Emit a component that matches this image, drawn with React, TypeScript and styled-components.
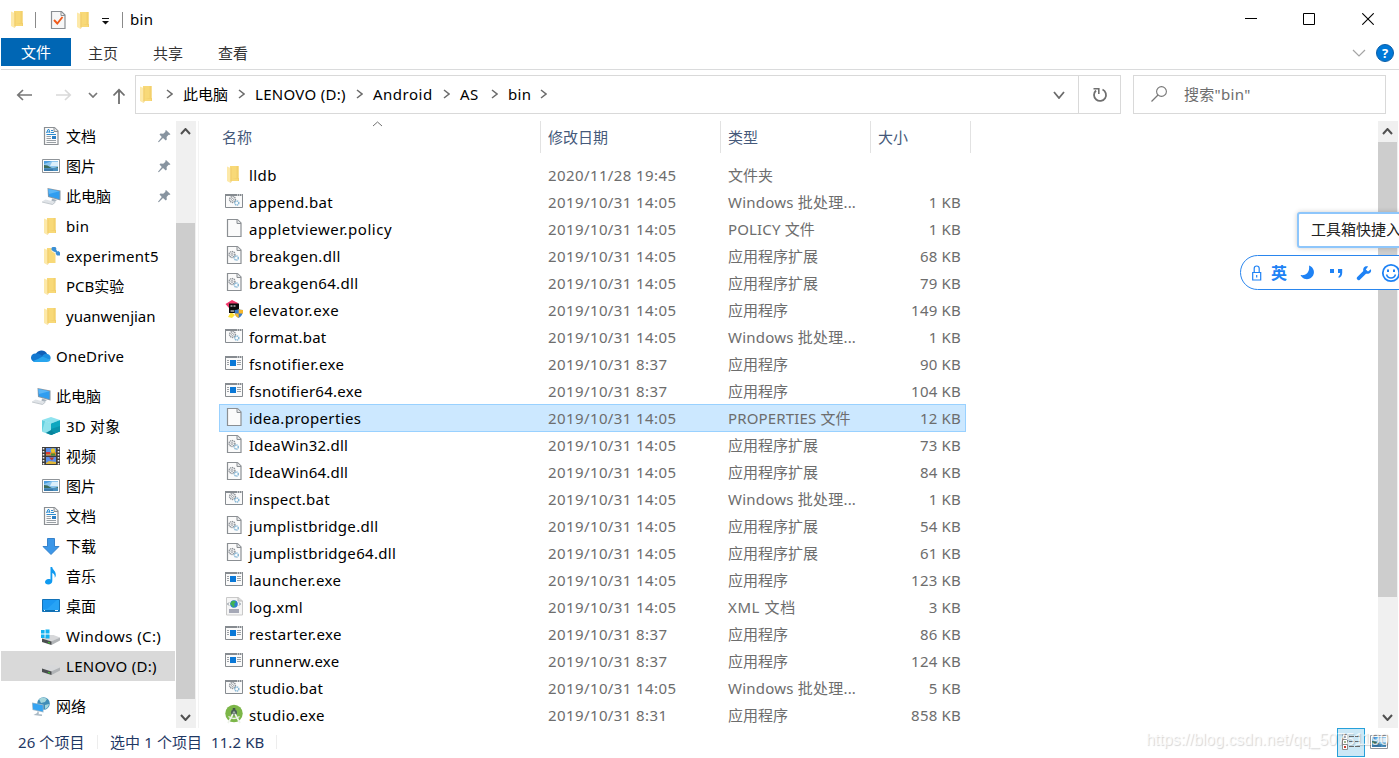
import React from 'react';
import styled, { createGlobalStyle } from 'styled-components';

const Global = createGlobalStyle`
  * { box-sizing: border-box; }
  html, body { margin: 0; padding: 0; overflow: hidden; background: #fff; }
  body { font: 15px/20px 'Noto Sans', 'Noto Sans CJK SC', sans-serif; color: #000; }
  svg { display: block; flex: none; }
`;

const Window = styled.div`
  position: relative;
  width: 1399px;
  height: 758px;
  display: flex;
  flex-direction: column;
  background: #fff;
  overflow: hidden;
  white-space: nowrap;
`;

/* ---------- title bar ---------- */
const TitleBar = styled.header`
  height: 38px;
  display: flex;
  align-items: center;
  padding-left: 8px;
  flex: none;
`;
const QuickAccess = styled.div`
  flex: 1;
  display: flex;
  align-items: center;
`;
const Separator = styled.i<{ $l: number; $r: number }>`
  width: 1px;
  height: 16px;
  margin: 1px ${p => p.$r}px 0 ${p => p.$l}px;
  background: #8a8a8a;
`;
const IconSlot = styled.span<{ $top?: number; $l?: number; $r?: number }>`
  display: block;
  flex: none;
  margin: ${p => p.$top || 0}px ${p => p.$r || 0}px 0 ${p => p.$l || 0}px;
`;
const Title = styled.span`
  letter-spacing: 0.3px;
`;
const WindowButton = styled.button`
  width: 58px;
  height: 38px;
  padding: 0;
  border: 0;
  background: none;
  display: flex;
  align-items: center;
  justify-content: center;

  &:last-child {
    width: 60px;
  }
`;
const WindowButtons = styled.div`
  display: flex;
  width: 177px;
`;

/* ---------- ribbon tabs ---------- */
const Ribbon = styled.nav`
  height: 32px;
  flex: none;
  display: flex;
  align-items: flex-start;
  margin-left: 1px;
  border-bottom: 1px solid #dadbdc;
`;
const FileTab = styled.span`
  width: 70px;
  height: 28px;
  line-height: 29px;
  text-align: center;
  color: #fff;
  background: #0066b4;
  margin-right: 4px;
`;
const Tab = styled.span`
  width: 65px;
  line-height: 30px;
  padding-left: 13px;
  color: #333;
`;
const RibbonTools = styled.div`
  margin-left: auto;
  display: flex;
  align-items: center;
  gap: 10px;
  height: 30px;
  padding-right: 5px;
`;
const Help = styled.span`
  width: 18px;
  height: 18px;
  border-radius: 50%;
  background: #0078d7;
  border: 1px solid #0a5ea8;
  color: #fff;
  font: bold 13px/16px 'Open Sans', sans-serif;
  text-align: center;
`;

/* ---------- address row ---------- */
const AddressRow = styled.div`
  height: 51px;
  flex: none;
  display: flex;
  align-items: flex-start;
  padding-top: 5px;
`;
const NavButtons = styled.div`
  width: 135px;
  height: 39px;
  display: flex;
  align-items: center;
  padding-left: 16px;
`;
const AddressBox = styled.div`
  width: 986px;
  height: 39px;
  border: 1px solid #d9d9d9;
  display: flex;
  align-items: center;
  padding-left: 1px;
`;
const Crumbs = styled.div`
  display: flex;
  align-items: center;
  padding-bottom: 2px;
`;
const Crumb = styled.span<{ $w: number; $ls?: number }>`
  flex: none;
  width: ${p => p.$w}px;
  letter-spacing: ${p => p.$ls || 0}px;
`;
const AddressEnd = styled.div`
  display: flex;
  align-items: center;
  gap: 13px;
  margin-left: auto;
`;
const Refresh = styled.span`
  width: 42px;
  height: 37px;
  border-left: 1px solid #d9d9d9;
  display: flex;
  align-items: center;
  justify-content: center;
`;
const SearchBox = styled.div`
  width: 253px;
  height: 39px;
  margin-left: 12px;
  border: 1px solid #d9d9d9;
  display: flex;
  align-items: center;
  padding: 0 0 2px 16px;
  gap: 16px;
  color: #6d6d6d;
  letter-spacing: 0.3px;
`;

/* ---------- body ---------- */
const Body = styled.main`
  height: 607px;
  flex: none;
  display: flex;
  padding-right: 1px;
`;
const Sidebar = styled.aside`
  width: 176px;
  padding-left: 1px;
  overflow: hidden;
`;
const TreeItem = styled.div<{ $level: number; $gap?: boolean; $active?: boolean }>`
  height: 30px;
  width: 174px;
  margin-top: ${p => (p.$gap ? 10 : 0)}px;
  padding-left: ${p => (p.$level === 1 ? 30 : 40)}px;
  padding-right: 4px;
  display: flex;
  align-items: center;
  gap: 5px;
  background: ${p => (p.$active ? '#d9d9d9' : 'transparent')};
`;
const TreeLabel = styled.span<{ $ls?: number }>`
  flex: 1;
  letter-spacing: ${p => p.$ls || 0}px;
`;
const Scrollbar = styled.div`
  width: 20px;
  height: 607px;
  flex: none;
  display: flex;
  flex-direction: column;
  background: #f0f0f0;
`;
const ScrollArrow = styled.span`
  width: 19px;
  height: 21px;
  display: flex;
  align-items: center;
  justify-content: center;
`;
const Thumb = styled.span<{ $top: number; $h: number }>`
  width: 19px;
  height: ${p => p.$h}px;
  margin: ${p => p.$top}px 0 auto;
  background: #cdcdcd;
`;
const Files = styled.section`
  flex: 1;
  margin-left: 2px;
  border-left: 1px solid #f3f3f3;
  padding-left: 20px;
`;
const Header = styled.div`
  position: relative;
  display: flex;
  height: 32px;
  margin-bottom: 8px;
  color: #45597a;
`;
const HeadCell = styled.span<{ $w: number; $pl: number }>`
  width: ${p => p.$w}px;
  padding-left: ${p => p.$pl}px;
  line-height: 33px;
  border-right: 1px solid #e2e2e2;
`;
const SortMark = styled.span`
  position: absolute;
  left: 153px;
  top: 0;
`;
const Row = styled.div<{ $active?: boolean }>`
  width: 747px;
  height: ${p => (p.$active ? 28 : 27)}px;
  margin-bottom: ${p => (p.$active ? -1 : 0)}px;
  border: ${p => (p.$active ? '1px solid #99d1ff' : '0 solid')};
  padding: 0 ${p => (p.$active ? '4px 1px' : '5px 0')};
  background: ${p => (p.$active ? '#cce8ff' : 'transparent')};
  display: flex;
  align-items: center;
  color: #6d6d6d;
`;
const FileIcon = styled.span`
  width: 25px;
  padding-bottom: 2px;
`;
const Name = styled.span<{ $ls: number }>`
  width: 299px;
  color: #000;
  letter-spacing: ${p => p.$ls}px;
`;
const DateCell = styled.span`
  width: 180px;
  letter-spacing: 0.4px;
`;
const Kind = styled.span<{ $ls: number }>`
  width: 150px;
  letter-spacing: ${p => p.$ls}px;
`;
const Size = styled.span`
  flex: 1;
  text-align: right;
  letter-spacing: 0.2px;
`;

/* ---------- status bar ---------- */
const StatusBar = styled.footer`
  height: 28px;
  flex: none;
  display: flex;
  align-items: center;
  padding: 0 10px 0 18px;
  color: #1f3864;
`;
const StatusText = styled.span<{ $w: number }>`
  width: ${p => p.$w}px;
  letter-spacing: 0.1px;
`;
const StatusLine = styled.i<{ $r: number }>`
  width: 1px;
  height: 14px;
  background: #ededed;
  margin-right: ${p => p.$r}px;
`;
const ViewButtons = styled.div`
  margin-left: auto;
  display: flex;
  align-items: center;
  gap: 4px;
`;
const DetailsButton = styled.span`
  width: 28px;
  height: 29px;
  border: 1px solid #26a0da;
  background: #cbe8f6;
  display: flex;
  align-items: center;
  justify-content: center;
`;
const Watermark = styled.span`
  position: absolute;
  left: 1146px;
  top: 730px;
  font: 15.9px/20px 'Liberation Sans', sans-serif;
  color: rgba(255, 255, 255, 0.75);
  text-shadow: 1px 1px 1px rgba(0, 0, 0, 0.17);
`;

/* ---------- floating tools ---------- */
const Tip = styled.div`
  position: absolute;
  left: 1297px;
  top: 212px;
  width: 120px;
  height: 36px;
  border: 2px solid #8ec6fb;
  border-radius: 3px;
  background: #fff;
  padding-left: 12px;
  line-height: 30px;
  color: #222;
  box-shadow: 0 0 5px rgba(0, 0, 0, 0.2);
`;
const InputBar = styled.div`
  position: absolute;
  left: 1240px;
  top: 255px;
  width: 200px;
  height: 35px;
  border: 1px solid #2a86ee;
  border-radius: 18px;
  background: #fff;
  display: flex;
  align-items: center;
  padding-left: 10px;
  color: #1e82f5;
`;
const Mode = styled.b`
  width: 29px;
  margin-left: 9px;
  font-size: 16px;
`;

/* ---------- icons ---------- */
const Svg = ({ children, w = 20, h = 20 }: { children: React.ReactNode; w?: number; h?: number }) => (
  <svg width={w} height={h} viewBox={`0 0 ${w} ${h}`} fill="none">{children}</svg>
);

const FolderIcon = () => (
  <Svg>
    <path d="M6 2h8.500v13H6z" fill="#f8d978" />
    <path d="M12.500 2h2v12h-2z" fill="#f3d06c" />
    <path d="M13 14h2v3H8v-2z" fill="#f3d06c" />
    <path d="M6 15h8v2H6z" fill="#f8d978" />
    <path d="M3 2.500 6.500 4v15L3 17z" fill="#fde9a9" />
    <path d="M6.500 4v15l1-1.200V3.500z" fill="#efcb6b" />
  </Svg>
);
const MarkedFolderIcon = () => (
  <Svg>
    <path d="M6 2h8.500v15H5z" fill="#f8d978" />
    <path d="M3 2.500 6.500 4v15L3 17z" fill="#fde9a9" />
    <path d="M6.500 4v15l1-1.200V3.500z" fill="#efcb6b" />
    <path d="M10.500 1h4.500l1.500 3 3 2v4h-4L14 7.500 10.500 5z" fill="#fff" opacity=".75" />
    <path d="M10.500 2l1-1h3l1 2-2 3-3-2zM14.500 7.500l3-2.500 1.500 1.500v3h-3z" fill="#3b8fd4" />
    <path d="M13 3l4.500 5" stroke="#3b8fd4" strokeWidth="2" />
  </Svg>
);
const Sheet = () => (
  <>
    <path d="M3.500 1.500h10l3.500 3.500v13.500H3.500z" fill="#fbfbfb" stroke="#8b8f93" strokeWidth="1.200" />
    <path d="M13 1.500V5.500h4" stroke="#8b8f93" fill="#e4e6e8" />
  </>
);
const DocumentIcon = () => (
  <Svg>
    <Sheet />
    <path d="M5.500 7l1.500-3.500h1L9 7M6 6h2.500" stroke="#2b8bd0" />
    <path d="M10 4.500h2M10 6.500h3M5.500 8.500H15" stroke="#2b8bd0" />
    <path d="M5.500 10.500H10M5.500 12.500H10M5.500 14.500H15M5.500 16.500H15" stroke="#9aa0a5" />
    <path d="M11 10h4v3h-4z" fill="#2b7fc4" />
  </Svg>
);
const BlankIcon = () => <Svg><Sheet /></Svg>;
const PictureIcon = () => (
  <Svg>
    <path d="M1.500 3.500h17v13h-17z" fill="#fff" stroke="#8f9499" />
    <path d="M3 5h14v10H3z" fill="#8fc7ef" />
    <path d="M3 5h8l-8 3z" fill="#4d9fe0" />
    <path d="M11 6h6v4h-8z" fill="#dceffb" />
    <path d="M3 9q4 0 6 2t8 0v1H3z" fill="#3d6d5c" />
    <path d="M3 12h14v3H3z" fill="#4a8fbe" />
    <path d="M3 14h9" stroke="#2f6796" />
  </Svg>
);
const ComputerIcon = () => (
  <Svg>
    <path d="M6.500 2 19.500 4.500v10L7 11z" fill="#8a98a5" />
    <path d="M7.300 3 18.500 5.200v8L7.800 10.200z" fill="#2f9df0" />
    <path d="M7.300 3 18.500 5.200 8 8z" fill="#5ab6f7" />
    <path d="M11 12.500l5 1.500-2.500 2-3-1z" fill="#aab4bd" />
    <path d="M1 15.500l3.500-2 10 2.500-3 2.500z" fill="#dfe3e7" />
    <path d="M1 16l10.500 2.500 3-2.500" stroke="#b4bbc2" strokeWidth=".8" />
  </Svg>
);
const CloudIcon = () => (
  <Svg>
    <path d="M4.500 8.500A6.500 6.500 0 0 1 16 7.500L12 12z" fill="#0f5fb8" />
    <path d="M4.500 7.500h3L13 11l-7 5H4A4.200 4.200 0 0 1 4.500 7.500z" fill="#1378d0" />
    <path d="M11.500 9.500q2-2.500 5-1.500A4 4 0 0 1 19 14L12 12z" fill="#1a8ee0" />
    <path d="M2 15q4-1 9.500-4.500L19.500 14q-1 2-3.500 2H4q-1.500 0-2-1z" fill="#28a5ee" />
  </Svg>
);
const CubeIcon = () => (
  <Svg>
    <path d="M10 1l9 3-9 3.500L1 4z" fill="#8fe3ef" />
    <path d="M1 4l9 3.500V19l-9-3.500z" fill="#62d0df" />
    <path d="M19 4l-9 3.500V19l9-3.500z" fill="#0fa7c0" />
    <path d="M10 13l9-3v5.500L10 19z" fill="#0a92ab" />
    <path d="M4 5.200l6 2.300v7L3 17 1 15.500z" fill="#b4f0f5" opacity=".55" />
    <path d="M10 14l4 3.500-4 1.500-5-2z" fill="#07849c" />
  </Svg>
);
const VideoIcon = () => (
  <Svg>
    <path d="M1 1h18v18H1z" fill="#3c3c3c" />
    <path d="M2.500 2v17M17.500 2v17" stroke="#f1f1f1" strokeWidth="1.600" strokeDasharray="1.500 1.500" />
    <path d="M5 2h10v7.500H5zM5 11h10v7H5z" fill="#5b8fe8" />
    <path d="M5 6.500h5l2-2 3 2v3H5z" fill="#d98a2e" />
    <circle cx="12" cy="4.500" r="2.200" fill="#e8c62b" />
    <path d="M5 6h4v2H5z" fill="#d93b34" />
    <path d="M10 7.500h4v2h-4z" fill="#49932d" />
    <path d="M8 11.500h5l-2 3z" fill="#c33628" />
    <path d="M5 17l3-2 7 1v2H5z" fill="#e0b63a" />
  </Svg>
);
const DownloadIcon = () => (
  <Svg>
    <path d="M6.500 2.500h7v8h4.500L10 18.500 2 10.500h4.500z" fill="#3c97e8" stroke="#2a79c6" strokeWidth=".9" />
  </Svg>
);
const MusicIcon = () => (
  <Svg>
    <path d="M9.500 1h1.700c.3 3 4 4 3.600 8.500-.1 1-.6 1.800-1 2.200.3-3-1.200-4-2.500-4.700V15c0 2-2 3.500-4 3.500S4 17.500 4 16s1.500-3 3.500-3c.8 0 1.500.2 2 .4z" fill="#109af0" />
  </Svg>
);
const DesktopIcon = () => (
  <Svg>
    <path d="M1.500 3.500h17v12h-17z" fill="#27a3f5" stroke="#1272b8" />
    <path d="M2 4h14L6 13H2z" fill="#1b98f2" />
    <path d="M2 14.500h16" stroke="#0f6fb0" />
    <path d="M3 14.500h1M14 14.500h3" stroke="#e8f6ff" />
  </Svg>
);
const DiskShape = () => (
  <>
    <path d="M1 12.500 8 9h4.500l6.500 2.500-7 3.500-2 .5z" fill="#d7d8da" />
    <path d="M10 15.500l9-4v3L10.500 19z" fill="#b1b4b7" />
    <path d="M1 12.500l9.500 3V19L1 16z" fill="#4b4e50" />
    <path d="M7 16l2 .6v1L7 17z" fill="#40d32c" />
  </>
);
const DriveIcon = () => <Svg><DiskShape /></Svg>;
const SystemDriveIcon = () => (
  <Svg>
    <DiskShape />
    <path d="M0 4h3.600v3.500H0zM4.500 3.500h4v4h-4zM0 8.400h3.600V12H0zM4.500 8.400h4v4h-4z" fill="#12b1f0" />
  </Svg>
);
const NetworkIcon = () => (
  <Svg>
    <circle cx="12.500" cy="7.500" r="6.300" fill="#3f8db8" />
    <path d="M8 3q4-3 8 0l-2 3-4 1zM14 9l4-1q-.5 4-4 5z" fill="#a5d6dc" />
    <path d="M1 6.500l11.500 2v8L1.500 14z" fill="#9eb8ca" />
    <path d="M1.700 7.300 11.800 9.200v6.300L2 13.300z" fill="#35a4f2" />
    <path d="M7 15.500v2l-2 1 6 .8" stroke="#aab9c4" strokeWidth="1.500" />
  </Svg>
);
const PinIcon = () => (
  <svg width="13" height="14" viewBox="0 0 13 14" fill="#8894a0">
    <path d="M8 1l4.500 4.200-1.300.8-.6-.2-2 2.200.2 2.600-1 1L5 9 .8 13.200 0 12.800 3.800 8 1.500 5.500l1-.9 2.700.1 2.300-2-.3-.8z" />
  </svg>
);
const Gears = () => (
  <>
    <circle cx="8.500" cy="8.500" r="2.900" stroke="#8d9298" strokeWidth="1.500" strokeDasharray="1.300 .6" />
    <circle cx="8.500" cy="8.500" r="1" stroke="#8d9298" strokeWidth=".8" />
    <circle cx="12.800" cy="12" r="2" stroke="#86b7d6" strokeWidth="1.500" strokeDasharray="1.200 .5" />
  </>
);
const DllIcon = () => <Svg><Sheet /><g transform="translate(-.5 1)"><Gears /></g></Svg>;
const BatIcon = () => (
  <Svg>
    <path d="M1.500 3.500h17v13h-17z" fill="#fafafa" stroke="#868b90" />
    <path d="M1 4h18" stroke="#868b90" strokeWidth="2" />
    <path d="M13 4h1M15 4h1M17 4h1" stroke="#fff" />
    <Gears />
  </Svg>
);
const ExeIcon = () => (
  <Svg>
    <path d="M1.500 3.500h17v13h-17z" fill="#fafafa" stroke="#868b90" />
    <path d="M1 4h18" stroke="#868b90" strokeWidth="2" />
    <path d="M13 4h1M15 4h1M17 4h1" stroke="#fff" />
    <path d="M6 7h6v6H6z" fill="#0a78d7" />
    <path d="M3 7.500h2M3 9.500h2M3 11.500h2M13 7.500h4M13 9.500h4M13 11.500h4" stroke="#9da1a5" />
  </Svg>
);
const ElevatorIcon = () => (
  <Svg>
    <path d="M1.500 5 8 1l6 3-1 3-8 2z" fill="#f0386b" />
    <path d="M4 18l3-5 4 3-3 3z" fill="#fbe03a" />
    <path d="M5 4.500h10V14H5z" fill="#0c0c0c" />
    <path d="M6.500 7h2M9.500 7h2M6.500 12h3.500" stroke="#fff" />
    <path d="M10.500 11q3 0 4-1 1.500 1 4.500 1 0 6-4.500 8-4-2-4-8z" fill="#3a7bc8" />
    <path d="M14.700 10q1.500 1 4.300 1v3.500h-4.300zM10.600 14.500h4.100V19q-3.500-1.500-4.100-4.500z" fill="#f5b62c" />
  </Svg>
);
const XmlIcon = () => (
  <Svg>
    <path d="M2.500 1.500h12L18.500 5v14h-16z" fill="#f5f5f5" stroke="#c9c9c9" />
    <path d="M14 1.500V5h4.500" stroke="#bbb" fill="#ddd" />
    <circle cx="10" cy="8" r="3.800" fill="#2d7fd0" />
    <path d="M8 5q3-1 4 1l-2 2 1 2-2 1.500q-1-3-3-3.500z" fill="#3fb354" />
    <path d="M5 6.500 3.500 8 5 9.500M15 6.500 16.500 8 15 9.500" stroke="#7d8893" />
    <path d="M5 13h10v4H5z" fill="#a5a8b6" />
  </Svg>
);
const StudioIcon = () => (
  <Svg>
    <circle cx="10" cy="9.500" r="8.700" fill="#7cb648" />
    <path d="M10 4v3" stroke="#3f5346" strokeWidth="2.500" />
    <circle cx="10" cy="8.500" r="3" fill="#4b5f54" />
    <path d="M9 10 4 19M11 10l5 9" stroke="#eef3ea" strokeWidth="1.700" />
    <path d="M4.500 12.500q5.500 4 11 0" stroke="#eef3ea" strokeWidth="1.300" />
    <circle cx="10" cy="8.500" r="1.200" fill="#9fb0a2" />
  </Svg>
);
const CheckDocIcon = () => (
  <Svg>
    <path d="M3.500 1.500h10l3.500 3.500v13.500H3.500z" fill="#f7f7f7" stroke="#8b8f93" strokeWidth="1.200" />
    <path d="M13 1.500V5.500h4" stroke="#8b8f93" />
    <path d="M6 10l3.300 3.500L14.500 7" stroke="#f05a1a" strokeWidth="1.900" />
  </Svg>
);
const Chevron = ({ dir, w, h, color = '#6b6b6b', sw = 1.5 }: { dir: 'r' | 'd' | 'u'; w: number; h: number; color?: string; sw?: number }) => {
  const d = dir === 'r' ? `M1 1L${w - 1} ${h / 2}L1 ${h - 1}` : dir === 'd' ? `M1 1L${w / 2} ${h - 1}L${w - 1} 1` : `M1 ${h - 1}L${w / 2} 1L${w - 1} ${h - 1}`;
  return <Svg w={w} h={h}><path d={d} stroke={color} strokeWidth={sw} /></Svg>;
};

/* ---------- data ---------- */
type Node = { label: string; icon: React.FC; level?: number; gap?: boolean; pin?: boolean; active?: boolean; ls?: number };
const tree: Node[] = [
  { label: '文档', icon: DocumentIcon, pin: true },
  { label: '图片', icon: PictureIcon, pin: true },
  { label: '此电脑', icon: ComputerIcon, pin: true },
  { label: 'bin', icon: FolderIcon, ls: 0.3 },
  { label: 'experiment5', icon: MarkedFolderIcon, ls: 0.3 },
  { label: 'PCB实验', icon: FolderIcon },
  { label: 'yuanwenjian', icon: FolderIcon, ls: 0 },
  { label: 'OneDrive', icon: CloudIcon, level: 1, gap: true, ls: 0.2 },
  { label: '此电脑', icon: ComputerIcon, level: 1, gap: true },
  { label: '3D 对象', icon: CubeIcon, ls: 0.2 },
  { label: '视频', icon: VideoIcon },
  { label: '图片', icon: PictureIcon },
  { label: '文档', icon: DocumentIcon },
  { label: '下载', icon: DownloadIcon },
  { label: '音乐', icon: MusicIcon },
  { label: '桌面', icon: DesktopIcon },
  { label: 'Windows (C:)', icon: SystemDriveIcon, ls: 0.4 },
  { label: 'LENOVO (D:)', icon: DriveIcon, active: true, ls: 0.3 },
  { label: '网络', icon: NetworkIcon, level: 1, gap: true },
];

const AM = '2019/10/31 8:37';
const PM = '2019/10/31 14:05';
const BAT = 'Windows 批处理...';
const DLL = '应用程序扩展';
const EXE = '应用程序';
const POLICY = 'POLICY 文件';
const PROPS = 'PROPERTIES 文件';
const XML = 'XML 文档';
const kindSpacing: Record<string, number> = { [BAT]: 0.22, [POLICY]: 0.15, [PROPS]: 0.15, [XML]: 0.6 };

type File = [name: string, icon: React.FC, date: string, kind: string, size: string, spacing: number];
const files: File[] = [
  ['lldb', FolderIcon, '2020/11/28 19:45', '文件夹', '', 0.4],
  ['append.bat', BatIcon, PM, BAT, '1 KB', 0.3],
  ['appletviewer.policy', BlankIcon, PM, POLICY, '1 KB', 0.52],
  ['breakgen.dll', DllIcon, PM, DLL, '68 KB', 0.3],
  ['breakgen64.dll', DllIcon, PM, DLL, '79 KB', 0.3],
  ['elevator.exe', ElevatorIcon, PM, EXE, '149 KB', 0.6],
  ['format.bat', BatIcon, PM, BAT, '1 KB', 0.2],
  ['fsnotifier.exe', ExeIcon, AM, EXE, '90 KB', 0.42],
  ['fsnotifier64.exe', ExeIcon, AM, EXE, '104 KB', 0.27],
  ['idea.properties', BlankIcon, PM, PROPS, '12 KB', 0.35],
  ['IdeaWin32.dll', DllIcon, PM, DLL, '73 KB', 0.2],
  ['IdeaWin64.dll', DllIcon, PM, DLL, '84 KB', 0.2],
  ['inspect.bat', BatIcon, PM, BAT, '1 KB', 0.3],
  ['jumplistbridge.dll', DllIcon, PM, DLL, '54 KB', 0.3],
  ['jumplistbridge64.dll', DllIcon, PM, DLL, '61 KB', 0.3],
  ['launcher.exe', ExeIcon, PM, EXE, '123 KB', 0.38],
  ['log.xml', XmlIcon, PM, XML, '3 KB', 0.25],
  ['restarter.exe', ExeIcon, AM, EXE, '86 KB', 0.42],
  ['runnerw.exe', ExeIcon, AM, EXE, '124 KB', 0.2],
  ['studio.bat', BatIcon, PM, BAT, '5 KB', 0.3],
  ['studio.exe', StudioIcon, '2019/10/31 8:31', EXE, '858 KB', 0.35],
];

const crumbs: [label: string, width: number, spacing: number][] = [
  ['此电脑', 55, 0],
  ['LENOVO (D:)', 101, 0.3],
  ['Android', 70, 0.5],
  ['AS', 31, 0.4],
  ['bin', 32, 0.3],
];

export default function App() {
  return (
    <Window>
      <Global />
      <TitleBar>
        <QuickAccess>
          <FolderIcon />
          <Separator $l={7} $r={12} />
          <IconSlot $top={1}><CheckDocIcon /></IconSlot>
          <IconSlot $top={1} $l={6}><FolderIcon /></IconSlot>
          <IconSlot $l={8} $r={13} $top={5}>
            <Svg w={7} h={7}><path d="M0 .5h7" stroke="#111" /><path d="M0 3h7L3.500 6.500z" fill="#111" /></Svg>
          </IconSlot>
          <Separator $l={0} $r={7} />
          <Title>bin</Title>
        </QuickAccess>
        <WindowButtons>
          <WindowButton><Svg w={12} h={12}><path d="M0 5.500h12" stroke="#000" /></Svg></WindowButton>
          <WindowButton><Svg w={12} h={12}><path d="M.5.5h11v11H.5z" stroke="#000" /></Svg></WindowButton>
          <WindowButton><Svg w={12} h={12}><path d="M.3.3l11.400 11.400M11.700.3.3 11.700" stroke="#000" strokeWidth="1.100" /></Svg></WindowButton>
        </WindowButtons>
      </TitleBar>

      <Ribbon>
        <FileTab>文件</FileTab>
        <Tab>主页</Tab>
        <Tab>共享</Tab>
        <Tab>查看</Tab>
        <RibbonTools>
          <Chevron dir="d" w={14} h={8} color="#a5a5a5" sw={1.2} />
          <Help>?</Help>
        </RibbonTools>
      </Ribbon>

      <AddressRow>
        <NavButtons>
          <Svg w={17} h={12}><path d="M16 6H2M7 1 1.800 6 7 11" stroke="#777" strokeWidth="1.700" /></Svg>
          <IconSlot $l={22}><Svg w={17} h={12}><path d="M1 6h14M10 1l5.200 5L10 11" stroke="#d9d9d9" strokeWidth="1.700" /></Svg></IconSlot>
          <IconSlot $l={16}><Chevron dir="d" w={10} h={6} color="#777" sw={1.7} /></IconSlot>
          <IconSlot $l={14} $top={2}><Svg w={14} h={16}><path d="M7 16V2M1.500 7.500 7 1.800l5.500 5.700" stroke="#6f6f6f" strokeWidth="1.800" /></Svg></IconSlot>
        </NavButtons>
        <AddressBox>
          <Crumbs>
            <FolderIcon />
            <IconSlot $l={9} $r={10}><Chevron dir="r" w={7} h={10} /></IconSlot>
            {crumbs.map(([label, w, ls]) => (
              <React.Fragment key={label}>
                <Crumb $w={w} $ls={ls}>{label}</Crumb>
                <IconSlot $r={10}><Chevron dir="r" w={7} h={10} /></IconSlot>
              </React.Fragment>
            ))}
          </Crumbs>
          <AddressEnd>
            <Chevron dir="d" w={12} h={8} sw={1.8} />
            <Refresh>
              <Svg w={16} h={16}>
                <path d="M10.500 2.500A6 6 0 1 1 4 3.500" stroke="#6f6f6f" strokeWidth="1.800" />
                <path d="M1.500 1.800H6.800V7" stroke="#6f6f6f" strokeWidth="1.600" />
              </Svg>
            </Refresh>
          </AddressEnd>
        </AddressBox>
        <SearchBox>
          <Svg w={18} h={18}>
            <circle cx="11.500" cy="6.500" r="4.900" stroke="#777" strokeWidth="1.100" />
            <path d="M8 10 1.500 16.500" stroke="#777" strokeWidth="1.200" />
          </Svg>
          搜索"bin"
        </SearchBox>
      </AddressRow>

      <Body>
        <Sidebar>
          {tree.map((n, i) => (
            <TreeItem key={i} $level={n.level || 2} $gap={n.gap} $active={n.active}>
              <n.icon />
              <TreeLabel $ls={n.ls}>{n.label}</TreeLabel>
              {n.pin && <PinIcon />}
            </TreeItem>
          ))}
        </Sidebar>
        <Scrollbar>
          <ScrollArrow><Chevron dir="u" w={11} h={7} color="#505050" sw={2} /></ScrollArrow>
          <Thumb $top={81} $h={476} />
          <ScrollArrow><Chevron dir="d" w={11} h={7} color="#505050" sw={2} /></ScrollArrow>
        </Scrollbar>
        <Files>
          <Header>
            <HeadCell $w={322} $pl={3}>名称</HeadCell>
            <HeadCell $w={180} $pl={7}>修改日期</HeadCell>
            <HeadCell $w={150} $pl={7}>类型</HeadCell>
            <HeadCell $w={100} $pl={7}>大小</HeadCell>
            <SortMark><Chevron dir="u" w={11} h={6} color="#707070" sw={1} /></SortMark>
          </Header>
          {files.map(([name, Icon, date, kind, size, ls]) => (
            <Row key={name} $active={name === 'idea.properties'}>
              <FileIcon><Icon /></FileIcon>
              <Name $ls={ls}>{name}</Name>
              <DateCell>{date}</DateCell>
              <Kind $ls={kindSpacing[kind] || 0}>{kind}</Kind>
              <Size>{size}</Size>
            </Row>
          ))}
        </Files>
        <Scrollbar>
          <ScrollArrow><Chevron dir="u" w={11} h={7} color="#505050" sw={2} /></ScrollArrow>
          <Thumb $top={0} $h={455} />
          <ScrollArrow><Chevron dir="d" w={11} h={7} color="#505050" sw={2} /></ScrollArrow>
        </Scrollbar>
      </Body>

      <StatusBar>
        <StatusText $w={79}>26 个项目</StatusText>
        <StatusLine $r={12} />
        <StatusText $w={101}>选中 1 个项目</StatusText>
        <StatusText $w={65}>11.2 KB</StatusText>
        <StatusLine $r={0} />
        <ViewButtons>
          <DetailsButton>
            <Svg w={18} h={18}>
              <path d="M.5 1.500h5v15h-5zM.5 6.500h5M.5 11.500h5" fill="#fff" stroke="#8c8c8c" />
              <path d="M2 4h2" stroke="#8a9bb0" strokeWidth="1.500" /><path d="M2 9h2" stroke="#7aa06a" strokeWidth="1.500" /><path d="M2 14h2" stroke="#c63a2c" strokeWidth="2" />
              <path d="M7 3.500h11M7 8.500h11M7 13.500h11" stroke="#6a6a6a" strokeDasharray="5 1" />
            </Svg>
          </DetailsButton>
          <PictureIcon />
        </ViewButtons>
      </StatusBar>

      <Watermark>https://blog.csdn.net/qq_50751190</Watermark>

      <Tip>工具箱快捷入</Tip>
      <InputBar>
        <Svg w={11} h={16}>
          <path d="M1.700 7.500h8v7.500h-8zM3.200 7.500V3.500a2.500 2.500 0 0 1 5 0v4M5.700 10v2.500" stroke="currentColor" strokeWidth="1.200" />
        </Svg>
        <Mode>英</Mode>
        <Svg w={15} h={15}><path d="M9 .5a7 7 0 1 1-8.500 9.500C6 11 10 7 9 .5z" fill="currentColor" /></Svg>
        <IconSlot $l={15}><Svg w={13} h={12}><path d="M0 2h4v4H0zM8 2h4.200v4q-.2 4-3.600 5V9.300q1.500-.7 1.600-3.300H8z" fill="currentColor" /></Svg></IconSlot>
        <IconSlot $l={13}>
          <Svg w={16} h={16}><path d="M14.800 4.200 12 6.500 9.800 4.500l2.300-3C9.500.3 6.500 2.500 7.300 6L1 12.300q-.8 1.300.3 2.300 1 1 2.300.3L10 8.700c3.500.8 6-2 4.800-4.500z" fill="currentColor" /></Svg>
        </IconSlot>
        <IconSlot $l={9}>
          <Svg w={20} h={20}>
            <circle cx="10" cy="10" r="8.200" stroke="currentColor" strokeWidth="1.800" />
            <path d="M6 6.500h2v2.500H6zM12 6.500h2v2.500h-2z" fill="currentColor" />
            <path d="M5.500 11.500q1 3.500 4.500 3.500t4.500-3.500" stroke="currentColor" strokeWidth="1.500" />
          </Svg>
        </IconSlot>
      </InputBar>
    </Window>
  );
}
